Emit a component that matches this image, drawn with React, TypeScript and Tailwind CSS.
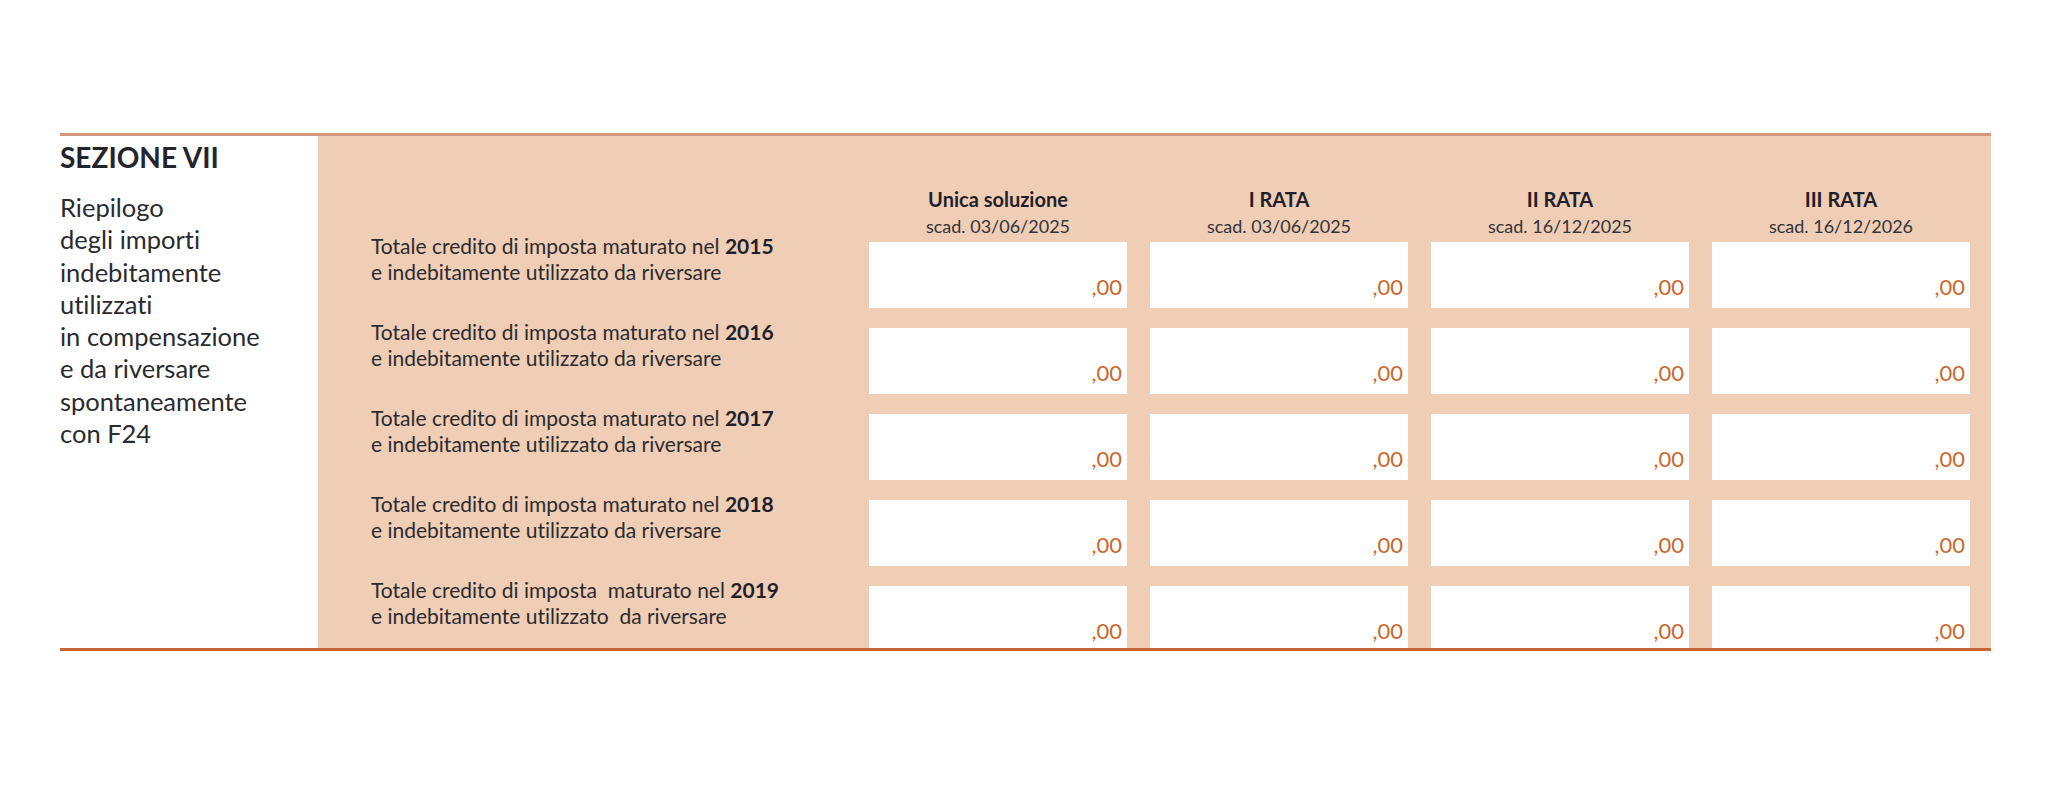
const columns = [
  { title: "Unica soluzione", due: "scad. 03/06/2025" },
  { title: "I RATA", due: "scad. 03/06/2025" },
  { title: "II RATA", due: "scad. 16/12/2025" },
  { title: "III RATA", due: "scad. 16/12/2026" },
];

const rows = [
  { year: "2015", first: "Totale credito di imposta maturato nel ", second: "e indebitamente utilizzato da riversare" },
  { year: "2016", first: "Totale credito di imposta maturato nel ", second: "e indebitamente utilizzato da riversare" },
  { year: "2017", first: "Totale credito di imposta maturato nel ", second: "e indebitamente utilizzato da riversare" },
  { year: "2018", first: "Totale credito di imposta maturato nel ", second: "e indebitamente utilizzato da riversare" },
  { year: "2019", first: "Totale credito di imposta  maturato nel ", second: "e indebitamente utilizzato  da riversare" },
];

const App = () => {
  return (
    <div
      className="w-[2048px] h-[797px] bg-white pt-[133px] pl-[60px] [font-variant-ligatures:none]"
      style={{ fontFamily: "Lato, 'Noto Sans', sans-serif" }}
    >
      <div className="w-[1931px] flex border-t-[3px] border-b-[3px] border-t-[#d4967c] border-b-[#c6672f]">
        {/* Section title */}
        <div className="w-[258px] pt-[5px] text-[#24242c]">
          <h2 className="text-[28px] leading-[32px] font-bold">SEZIONE VII</h2>
          <p className="mt-[18px] text-[25.5px] leading-[32.3px] text-[#2a2a2f]">
            Riepilogo
            <br />
            degli importi
            <br />
            indebitamente
            <br />
            utilizzati
            <br />
            in compensazione
            <br />
            e da riversare
            <br />
            spontaneamente
            <br />
            con F24
          </p>
        </div>

        {/* Amounts table */}
        <div className="flex-1 bg-[#f0cdb5] pl-[53px] pr-[21px] flex flex-col">
          <div className="h-[106px] grid grid-cols-[475px_repeat(4,258px)] gap-x-[23px]">
            <div />
            {columns.map((col, index) => (
              <div key={index} className="flex flex-col items-center justify-end pb-[5px]">
                <span className="text-[20px] leading-[24px] font-bold text-[#1f1f2b] mb-[4px]">{col.title}</span>
                <span className="text-[18px] leading-[22px] text-[#33333a]">{col.due}</span>
              </div>
            ))}
          </div>

          <div className="grid grid-cols-[475px_repeat(4,258px)] gap-x-[23px] gap-y-[20px]">
            {rows.map((row, rowIndex) => {
              const last = rowIndex === rows.length - 1;
              return [
                <div key={`l${rowIndex}`} className={last ? "h-[62px]" : "h-[66px]"}>
                  <div className="-mt-[9px] text-[21px] leading-[26px] text-[#2b2b30] whitespace-pre">
                    <div>
                      {row.first}
                      <span className="font-bold text-[#1f1f2b]">{row.year}</span>
                    </div>
                    <div>{row.second}</div>
                  </div>
                </div>,
                ...columns.map((_, colIndex) => (
                  <div
                    key={`c${rowIndex}-${colIndex}`}
                    className={`${last ? "h-[62px] pb-[6px]" : "h-[66px] pb-[10px]"} bg-white flex items-end justify-end pr-[5px]`}
                  >
                    <span className="text-[22px] leading-none text-[#c9692f]">,00</span>
                  </div>
                )),
              ];
            })}
          </div>
        </div>
      </div>
    </div>
  );
};

export default App;
